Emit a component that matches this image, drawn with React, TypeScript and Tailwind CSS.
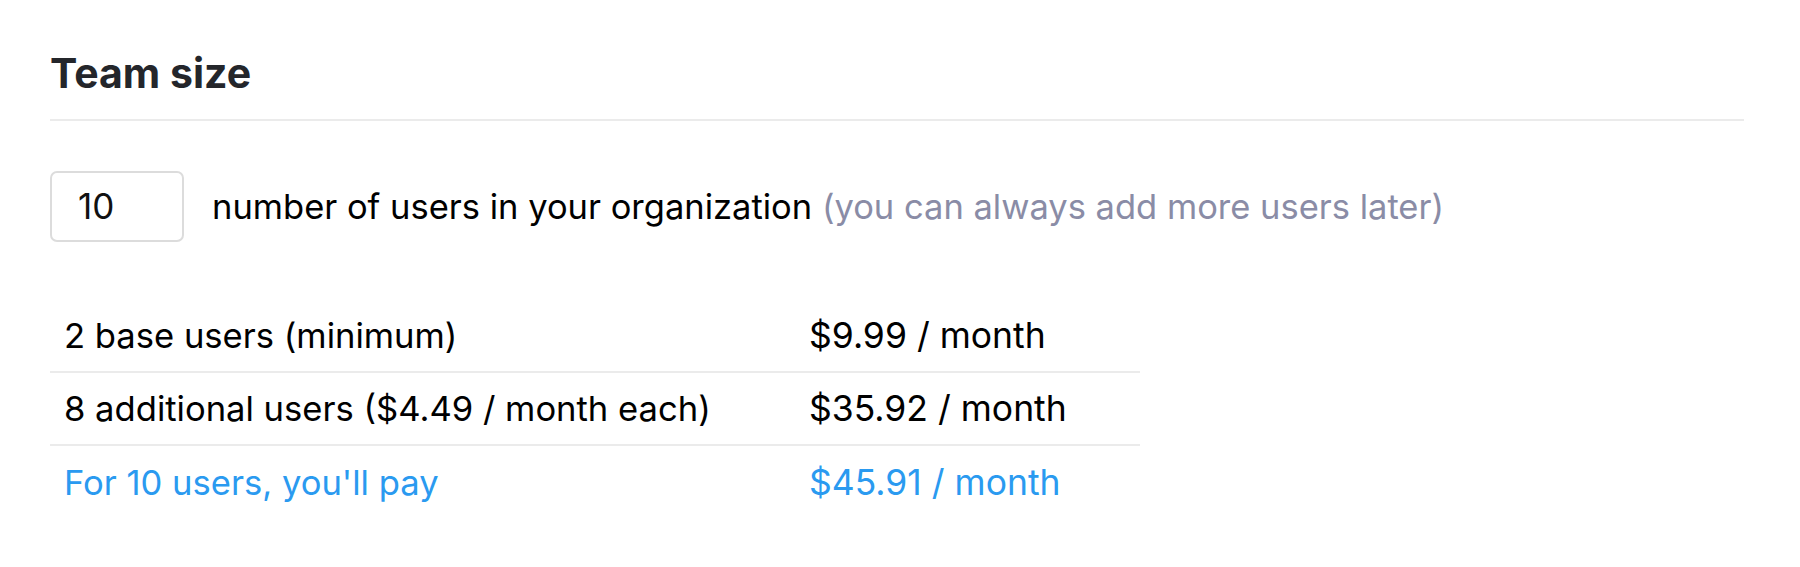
import React from "react";

const rows = [
  { label: "2 base users (minimum)", price: "$9.99 / month", accent: false },
  { label: "8 additional users ($4.49 / month each)", price: "$35.92 / month", accent: false },
  { label: "For 10 users, you'll pay", price: "$45.91 / month", accent: true },
];

export default function App() {
  return (
    <div
      className="w-full h-[567px] bg-white pl-[50px] pr-[56px] pt-[50px] text-[#111]"
      style={{ fontFamily: "Inter, 'Liberation Sans', sans-serif" }}
    >
      <h2 className="text-[41px] font-bold leading-[46px] text-[#24262b] pb-[23px] border-b-2 border-[#ebebeb]">
        Team size
      </h2>
      <div className="flex items-center mt-[50px] gap-[28px]">
        <div className="w-[134px] h-[71px] border-2 border-[#dcdcdc] rounded-[7px] flex items-center pl-[26px] text-[35px]">
          10
        </div>
        <div className="text-[34.5px] leading-[40px]">
          <span className="text-black">number of users in your organization </span>
          <span className="text-[#8a8ca6]">(you can always add more users later)</span>
        </div>
      </div>
      <div className="mt-[58px] w-[1090px] text-[34.6px]">
        {rows.map((r, i) => (
          <div
            key={i}
            className={`flex items-center h-[73px] ${i < rows.length - 1 ? "border-b-2 border-[#ebebeb]" : ""} ${
              r.accent ? "text-[#2a9af0]" : "text-black"
            }`}
          >
            <div className="w-[759px] pl-[14px]">{r.label}</div>
            <div className="text-[35.5px]">{r.price}</div>
          </div>
        ))}
      </div>
    </div>
  );
}
